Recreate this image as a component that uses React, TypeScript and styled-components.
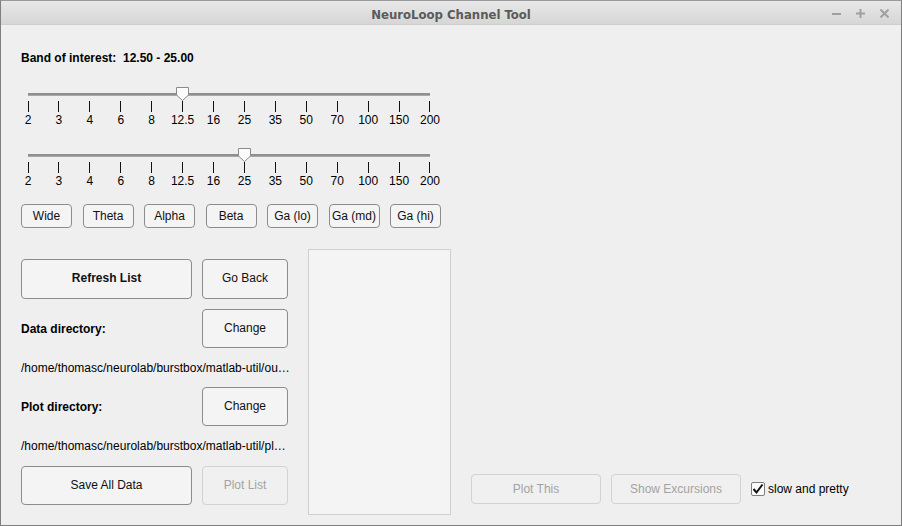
import React from 'react';
import styled, { createGlobalStyle } from 'styled-components';

const Global = createGlobalStyle`
  html, body { margin: 0; padding: 0; background: #efefef; }
  body { font-family: "Liberation Sans", Arial, sans-serif; font-size: 12px; color: #000; }
  * { box-sizing: border-box; }
`;

const Window = styled.div`
  width: 902px;
  height: 526px;
  border: 1px solid #7e7e7e;
  border-top-color: #9a9a9a;
  background: #efefef;
  display: flex;
  flex-direction: column;
  overflow: hidden;
`;

const TitleBar = styled.div`
  height: 24px;
  flex: none;
  display: grid;
  grid-template-columns: 1fr auto 1fr;
  align-items: center;
  background: linear-gradient(#e8e8e8, #d6d6d6);
  border-bottom: 1px solid #cdcdcd;
`;

const Title = styled.div`
  grid-column: 2;
  font-family: "DejaVu Sans Condensed", "DejaVu Sans", sans-serif;
  font-stretch: condensed;
  font-weight: bold;
  font-size: 13px;
  color: #5a5a5a;
  padding-top: 3px;
`;

const Controls = styled.div`
  grid-column: 3;
  justify-self: end;
  display: flex;
  gap: 15px;
  padding-right: 12px;
  padding-top: 2px;
`;

const Content = styled.div`
  flex: 1;
  display: flex;
  flex-direction: column;
  padding: 25px 20px 10px 20px;
`;

const BandLabel = styled.div`
  font-weight: bold;
  line-height: 14px;
  padding-top: 1px;
  white-space: pre;
`;

const SliderWrap = styled.div<{ $mt: number }>`
  position: relative;
  width: 432px;
  margin-left: -8px;
  margin-top: ${p => p.$mt}px;
`;

const TrackArea = styled.div`
  height: 14px;
  padding: 0 15px;
  display: flex;
  align-items: center;
`;

const Track = styled.div`
  width: 100%;
  height: 3px;
  background: #8f8f8f;
  border-bottom: 1px solid #a8a8a8;
`;

const Thumb = styled.svg`
  position: absolute;
  top: 0;
  width: 13px;
  height: 14px;
`;

const TickRow = styled.div`
  display: flex;
  justify-content: space-between;
`;

const Tick = styled.div`
  width: 30px;
  display: flex;
  flex-direction: column;
  align-items: center;
`;

const TickLine = styled.div`
  width: 1px;
  height: 11px;
  background: #111;
`;

const TickLabel = styled.div`
  line-height: 17px;
  white-space: nowrap;
`;

const BandRow = styled.div`
  width: 420px;
  margin-top: 14px;
  display: flex;
  justify-content: space-between;
`;

const Button = styled.button<{ $w?: number; $h: number; $bold?: boolean }>`
  font-family: "Liberation Sans", Arial, sans-serif;
  font-size: 12px;
  font-weight: ${p => (p.$bold ? 'bold' : 'normal')};
  width: ${p => (p.$w ? `${p.$w}px` : '100%')};
  height: ${p => p.$h}px;
  padding: 0 0 ${p => (p.$h >= 39 ? 2 : 0)}px;
  border: 1px solid #8c8c8c;
  border-radius: 4px;
  background: #f4f4f4;
  color: #111;
  &:disabled {
    border-color: #d2d2d2;
    color: #a3a3a3;
    background: #f0f0f0;
  }
`;

const Bottom = styled.div`
  flex: 1;
  margin-top: 21px;
  display: flex;
  gap: 20px;
`;

const LeftCol = styled.div`
  width: 267px;
  padding-top: 10px;
  display: grid;
  grid-template-columns: 171px 86px;
  grid-template-rows: 40px 39px 19px 39px 20px 39px;
  column-gap: 10px;
  row-gap: 10px;
  align-content: start;
`;

const FieldLabel = styled.div`
  font-weight: bold;
  align-self: center;
`;

const Path = styled.div`
  grid-column: 1 / span 2;
  align-self: center;
  white-space: nowrap;
  line-height: 14px;
`;

const ListBox = styled.div`
  width: 143px;
  background: #f4f4f4;
  border: 1px solid #cfcfcf;
`;

const RightArea = styled.div`
  flex: 1;
  display: flex;
  align-items: flex-end;
  gap: 10px;
  padding-bottom: 11px;
`;

const CheckWrap = styled.label`
  display: flex;
  align-items: center;
  gap: 3px;
  height: 30px;
  font-size: 12px;
`;

const CheckBox = styled.span`
  width: 14px;
  height: 14px;
  border: 1px solid #7d7d7d;
  border-radius: 2px;
  background: #fbfbfb;
  display: flex;
  align-items: center;
  justify-content: center;
`;

const TICKS = ['2', '3', '4', '6', '8', '12.5', '16', '25', '35', '50', '70', '100', '150', '200'];

function Slider({ value, mt }: { value: number; mt: number }) {
  const left = 15 + (value / (TICKS.length - 1)) * 402 - 6.5;
  return (
    <SliderWrap $mt={mt}>
      <TrackArea>
        <Track />
      </TrackArea>
      <Thumb style={{ left }} viewBox="0 0 13 14">
        <path d="M0.5 0.5 H12.5 V8 L6.5 13.5 L0.5 8 Z" fill="#fbfbfb" stroke="#8a8a8a" strokeWidth="1" />
      </Thumb>
      <TickRow>
        {TICKS.map(t => (
          <Tick key={t}>
            <TickLine />
            <TickLabel>{t}</TickLabel>
          </Tick>
        ))}
      </TickRow>
    </SliderWrap>
  );
}

const BANDS = ['Wide', 'Theta', 'Alpha', 'Beta', 'Ga (lo)', 'Ga (md)', 'Ga (hi)'];

export default function App() {
  return (
    <>
      <Global />
      <Window>
        <TitleBar>
          <Title>NeuroLoop Channel Tool</Title>
          <Controls>
            <svg width="9" height="9" viewBox="0 0 9 9">
              <path d="M0 5 H9" stroke="#a0a0a0" strokeWidth="2" />
            </svg>
            <svg width="9" height="9" viewBox="0 0 9 9">
              <path d="M0 4.5 H9 M4.5 0 V9" stroke="#a0a0a0" strokeWidth="2" />
            </svg>
            <svg width="9" height="9" viewBox="0 0 9 9">
              <path d="M0.5 0.5 L8.5 8.5 M8.5 0.5 L0.5 8.5" stroke="#a0a0a0" strokeWidth="2" />
            </svg>
          </Controls>
        </TitleBar>
        <Content>
          <BandLabel>{'Band of interest:  12.50 - 25.00'}</BandLabel>
          <Slider value={5} mt={22} />
          <Slider value={7} mt={19} />
          <BandRow>
            {BANDS.map(b => (
              <Button key={b} $w={51} $h={24}>{b}</Button>
            ))}
          </BandRow>
          <Bottom>
            <LeftCol>
              <Button $h={40} $bold>Refresh List</Button>
              <Button $h={40}>Go Back</Button>
              <FieldLabel>Data directory:</FieldLabel>
              <Button $h={39}>Change</Button>
              <Path>/home/thomasc/neurolab/burstbox/matlab-util/ou…</Path>
              <FieldLabel>Plot directory:</FieldLabel>
              <Button $h={39}>Change</Button>
              <Path>/home/thomasc/neurolab/burstbox/matlab-util/pl…</Path>
              <Button $h={39}>Save All Data</Button>
              <Button $h={39} disabled>Plot List</Button>
            </LeftCol>
            <ListBox />
            <RightArea>
              <Button $w={130} $h={30} disabled>Plot This</Button>
              <Button $w={130} $h={30} disabled>Show Excursions</Button>
              <CheckWrap>
                <CheckBox>
                  <svg width="12" height="12" viewBox="0 0 12 12">
                    <path d="M1.5 6 L4.5 9.5 L10.5 1.5" fill="none" stroke="#111" strokeWidth="2" />
                  </svg>
                </CheckBox>
                slow and pretty
              </CheckWrap>
            </RightArea>
          </Bottom>
        </Content>
      </Window>
    </>
  );
}
